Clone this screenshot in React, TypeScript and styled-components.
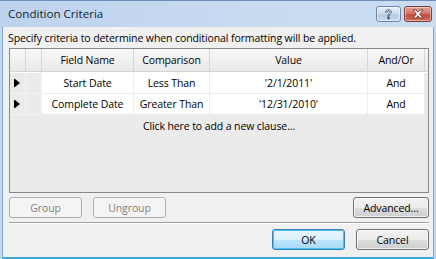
import React from "react";
import styled, { createGlobalStyle } from "styled-components";

const Global = createGlobalStyle`
  html, body { margin: 0; padding: 0; background: #ffffff; }
  body { font-family: "Open Sans", "Noto Sans", sans-serif; }
`;

const Window = styled.div`
  width: 436px;
  height: 259px;
  box-sizing: border-box;
  display: flex;
  flex-direction: column;
  background: #c4d8ef;
  border-top: 1px solid #6d8fb8;
  overflow: hidden;
`;

const TitleBar = styled.div`
  height: 26px;
  flex: none;
  display: flex;
  align-items: center;
  padding: 0 4px 0 8px;
  background: linear-gradient(to right, #bcd2ec, #c9dbf1 60%, #cadcf2);
`;

const Title = styled.div`
  flex: 1;
  font-size: 11.6px;
  color: #0f1e33;
  margin-top: -1px;
`;

const CaptionButton = styled.div<{ $close?: boolean }>`
  width: ${(p) => (p.$close ? 28 : 25)}px;
  height: 16px;
  box-sizing: border-box;
  margin-left: ${(p) => (p.$close ? 3 : 0)}px;
  border: 1px solid ${(p) => (p.$close ? "#7c3b3b" : "#6e85a3")};
  border-radius: 3px;
  display: flex;
  align-items: center;
  justify-content: center;
  background: ${(p) =>
    p.$close
      ? "linear-gradient(to bottom, #e0a196 0%, #d47a6b 45%, #c24b3a 55%, #cf6e58 100%)"
      : "linear-gradient(to bottom, #e6eef8 0%, #cfdcec 45%, #b9cbe2 55%, #c9d9ec 100%)"};
  box-shadow: inset 0 0 0 1px rgba(255, 255, 255, 0.45);
`;

const Frame = styled.div`
  flex: 1;
  display: flex;
  flex-direction: column;
  border-left: 2px solid #c4d8ef;
  border-right: 2px solid #c4d8ef;
`;

const Body = styled.div`
  flex: 1;
  display: flex;
  flex-direction: column;
  background: #f0f0f0;
  border-left: 1px solid #7ea6d3;
  border-right: 1px solid #7ea6d3;
  border-bottom: 2px solid #3ea8de;
  padding: 3px 4px 0 5px;
  font-size: 10.5px;
  letter-spacing: -0.1px;
  color: #000;
`;

const Description = styled.div`
  height: 16px;
  line-height: 16px;
  margin: 0 0 2px 0;
  white-space: nowrap;
`;

const Grid = styled.div`
  height: 145px;
  margin-left: 1px;
  box-sizing: border-box;
  border: 1px solid #828790;
  background: #ebebeb;
  display: flex;
  flex-direction: column;
`;

const COLS = "16px 16px 92px 76px 158px 57px 1fr";

const HeaderRow = styled.div`
  display: grid;
  grid-template-columns: ${COLS};
  height: 24px;
  box-sizing: border-box;
  border-bottom: 1px solid #ffffff;
  background: linear-gradient(to bottom, #f8f8f8, #efefef 60%, #e9e9e9);
`;

const HeaderCell = styled.div<{ $last?: boolean }>`
  display: flex;
  align-items: center;
  justify-content: center;
  border-right: ${(p) => (p.$last ? "none" : "1px solid #d5d5d5")};
  border-bottom: 1px solid #d5d5d5;
`;

const DataRow = styled.div`
  display: grid;
  grid-template-columns: ${COLS};
  height: 21px;
  box-sizing: border-box;
`;

const RowHeader = styled.div`
  display: flex;
  align-items: center;
  justify-content: center;
  border-right: 1px solid #f4f4f4;
  border-bottom: 1px solid #f4f4f4;
  background: #ebebeb;
`;

const Cell = styled.div`
  display: flex;
  align-items: center;
  justify-content: center;
  background: #ffffff;
  border-right: 1px solid #ebebeb;
  border-bottom: 1px solid #ebebeb;
  white-space: nowrap;
`;

const Filler = styled.div`
  background: #ebebeb;
`;

const NewClause = styled.div`
  height: 21px;
  display: flex;
  align-items: center;
  justify-content: center;
`;

const ButtonRow = styled.div<{ $top: number }>`
  display: flex;
  align-items: center;
  margin-top: ${(p) => p.$top}px;
  margin-left: 1px;
`;

const Spacer = styled.div`
  flex: 1;
`;

const Button = styled.button<{ $w: number; $default?: boolean; $gap?: number }>`
  width: ${(p) => p.$w}px;
  height: 21px;
  margin-left: ${(p) => p.$gap ?? 0}px;
  box-sizing: border-box;
  padding: 0;
  font-family: inherit;
  font-size: 10.5px;
  letter-spacing: -0.1px;
  color: #000;
  border-radius: 3px;
  border: 1px solid ${(p) => (p.$default ? "#3c7fb1" : "#707070")};
  background: ${(p) =>
    p.$default
      ? "linear-gradient(to bottom, #eaf6fd 0%, #d9f0fc 50%, #bee6fd 51%, #a7d9f5 100%)"
      : "linear-gradient(to bottom, #f2f2f2 0%, #ebebeb 50%, #dddddd 51%, #cfcfcf 100%)"};
  box-shadow: ${(p) =>
    p.$default ? "inset 0 0 0 1px #48c0f0" : "inset 0 0 0 1px rgba(255,255,255,0.7)"};
  &:disabled {
    color: #838383;
    border-color: #adb2b5;
    background: #f4f4f4;
    box-shadow: none;
  }
`;

const Separator = styled.div`
  height: 1px;
  margin: 4px 0 0 1px;
  background: #a0a0a0;
  border-bottom: 1px solid #ffffff;
`;

const Arrow = () => (
  <svg width="7" height="8" viewBox="0 0 7 8">
    <rect x="0" y="0" width="1" height="8" fill="#000" />
    <path d="M1 0 L6 4 L1 8 Z" fill="#000" />
  </svg>
);

const HelpGlyph = () => (
  <svg width="9" height="11" viewBox="0 0 9 11">
    <path
      d="M1.5 3.2 C1.5 1.5 3 0.8 4.5 0.8 C6.2 0.8 7.5 1.7 7.5 3.2 C7.5 4.6 5.2 5 5.2 6.8 L3.8 6.8 C3.8 4.6 6 4.3 6 3.2 C6 2.4 5.3 2 4.5 2 C3.6 2 3 2.5 3 3.2 Z"
      fill="#f4f7fb"
      stroke="#2f4a6e"
      strokeWidth="0.8"
    />
    <rect x="3.7" y="8" width="1.6" height="1.8" fill="#f4f7fb" stroke="#2f4a6e" strokeWidth="0.8" />
  </svg>
);

const CloseGlyph = () => (
  <svg width="12" height="10" viewBox="0 0 12 10">
    <path
      d="M1 1 L4 1 L6 3.2 L8 1 L11 1 L7.6 5 L11 9 L8 9 L6 6.8 L4 9 L1 9 L4.4 5 Z"
      fill="#ffffff"
      stroke="#5a2a2a"
      strokeWidth="0.8"
      strokeLinejoin="round"
    />
  </svg>
);

const rows = [
  { field: "Start Date", comparison: "Less Than", value: "'2/1/2011'", andOr: "And" },
  { field: "Complete Date", comparison: "Greater Than", value: "'12/31/2010'", andOr: "And" },
];

export default function App() {
  return (
    <>
      <Global />
      <Window>
        <TitleBar>
          <Title>Condition Criteria</Title>
          <CaptionButton>
            <HelpGlyph />
          </CaptionButton>
          <CaptionButton $close>
            <CloseGlyph />
          </CaptionButton>
        </TitleBar>
        <Frame>
          <Body>
            <Description>
              Specify criteria to determine when conditional formatting will be applied.
            </Description>
            <Grid>
              <HeaderRow>
                <HeaderCell />
                <HeaderCell />
                <HeaderCell>Field Name</HeaderCell>
                <HeaderCell>Comparison</HeaderCell>
                <HeaderCell>Value</HeaderCell>
                <HeaderCell>And/Or</HeaderCell>
                <HeaderCell $last />
              </HeaderRow>
              {rows.map((r) => (
                <DataRow key={r.field}>
                  <RowHeader>
                    <Arrow />
                  </RowHeader>
                  <RowHeader />
                  <Cell>{r.field}</Cell>
                  <Cell>{r.comparison}</Cell>
                  <Cell>{r.value}</Cell>
                  <Cell>{r.andOr}</Cell>
                  <Filler />
                </DataRow>
              ))}
              <NewClause>Click here to add a new clause...</NewClause>
            </Grid>
            <ButtonRow $top={4}>
              <Button $w={73} disabled>
                Group
              </Button>
              <Button $w={73} $gap={11} disabled>
                Ungroup
              </Button>
              <Spacer />
              <Button $w={76}>Advanced...</Button>
            </ButtonRow>
            <Separator />
            <ButtonRow $top={5}>
              <Spacer />
              <Button $w={73} $default>
                OK
              </Button>
              <Button $w={73} $gap={11}>
                Cancel
              </Button>
            </ButtonRow>
          </Body>
        </Frame>
      </Window>
    </>
  );
}
